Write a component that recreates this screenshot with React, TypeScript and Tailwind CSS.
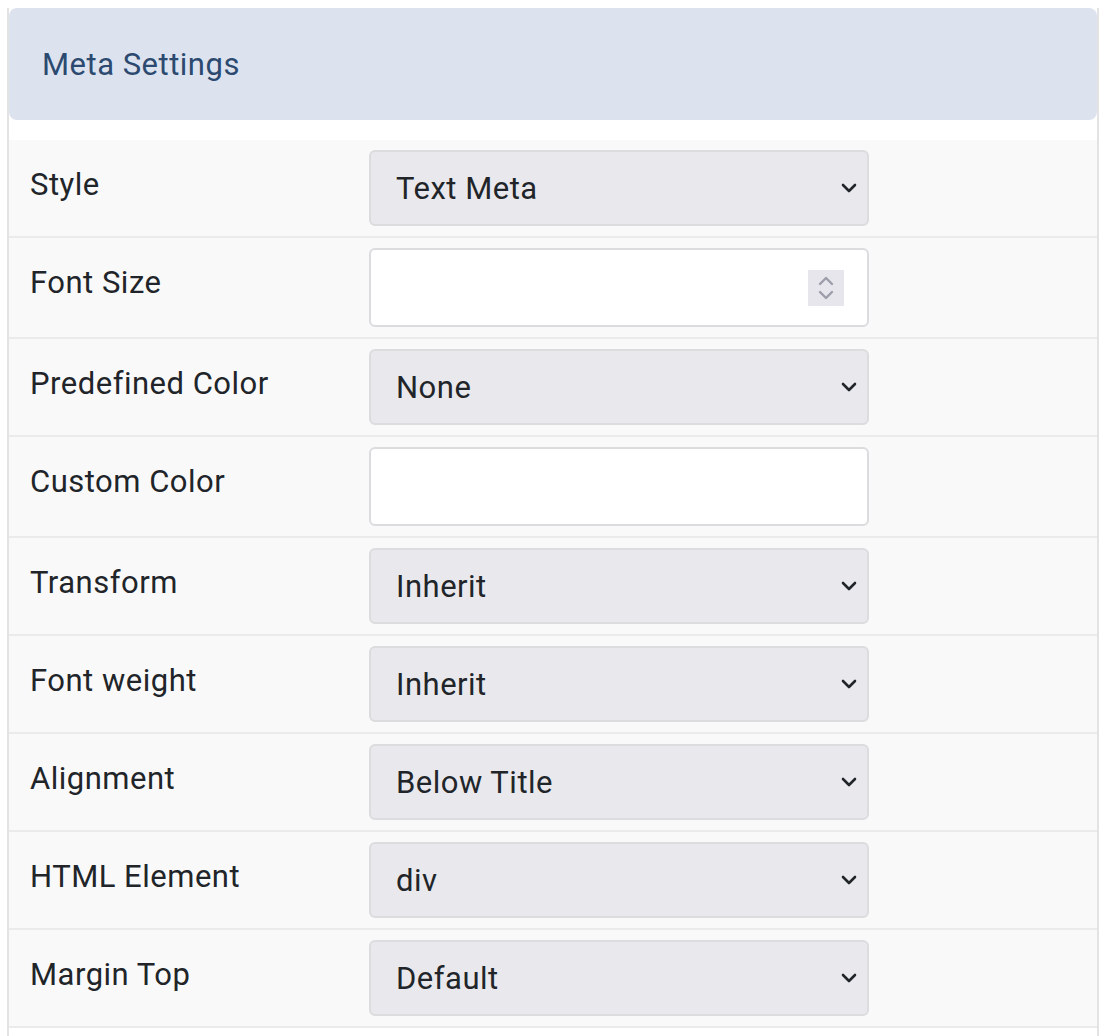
import { useState } from "react"

type Field = {
  label: string
  kind: "select" | "number" | "text"
  value?: string
  options?: string[]
}

const FIELDS: Field[] = [
  { label: "Style", kind: "select", value: "Text Meta", options: ["Text Meta", "Default"] },
  { label: "Font Size", kind: "number" },
  { label: "Predefined Color", kind: "select", value: "None", options: ["None", "Primary", "Muted"] },
  { label: "Custom Color", kind: "text" },
  { label: "Transform", kind: "select", value: "Inherit", options: ["Inherit", "Uppercase", "Lowercase"] },
  { label: "Font weight", kind: "select", value: "Inherit", options: ["Inherit", "Normal", "Bold"] },
  { label: "Alignment", kind: "select", value: "Below Title", options: ["Below Title", "Above Title"] },
  { label: "HTML Element", kind: "select", value: "div", options: ["div", "span", "p"] },
  { label: "Margin Top", kind: "select", value: "Default", options: ["Default", "Small", "Large"] },
]

function Chevron() {
  return (
    <svg className="pointer-events-none absolute right-[12px] top-1/2 -translate-y-1/2" width="16" height="10" viewBox="0 0 16 10">
      <path d="M2 2 L8 8 L14 2" fill="none" stroke="#212529" strokeWidth="2.6" strokeLinecap="round" strokeLinejoin="round" />
    </svg>
  )
}

function Spinner() {
  return (
    <div className="pointer-events-none absolute right-[25px] top-1/2 -translate-y-1/2 flex h-[36px] w-[36px] flex-col items-center justify-center gap-[4px] bg-[#e6e6ec]">
      <svg width="16" height="10" viewBox="0 0 16 10">
        <path d="M2 8 L8 2 L14 8" fill="none" stroke="#9d9dab" strokeWidth="2.4" strokeLinecap="round" strokeLinejoin="round" />
      </svg>
      <svg width="16" height="10" viewBox="0 0 16 10">
        <path d="M2 2 L8 8 L14 2" fill="none" stroke="#9d9dab" strokeWidth="2.4" strokeLinecap="round" strokeLinejoin="round" />
      </svg>
    </div>
  )
}

function Row({ field }: { field: Field }) {
  const [value, setValue] = useState(field.value ?? "")

  return (
    <div className="flex items-start border-b-2 border-[#ebebeb] bg-[#f9f9f9] py-[10px]">
      <label className="w-[360px] shrink-0 pl-[21px] pt-[12px] text-[31px] leading-[46px] tracking-[0.5px] text-[#212529]">
        {field.label}
      </label>
      {field.kind === "select" ? (
        <div className="relative w-[500px]">
          <select
            value={value}
            onChange={(e) => setValue(e.target.value)}
            className="h-[76px] w-full appearance-none rounded-[6px] border-2 border-[#dcdcdf] bg-[#e9e9ed] pl-[25px] pt-[2px] text-[31px] tracking-[0.5px] text-[#212529] outline-none"
          >
            {field.options?.map((o) => (
              <option key={o}>{o}</option>
            ))}
          </select>
          <Chevron />
        </div>
      ) : (
        <div className="relative w-[500px]">
          <input
            type="text"
            value={value}
            onChange={(e) => setValue(e.target.value)}
            className="h-[79px] w-full rounded-[6px] border-2 border-[#dcdcdf] bg-white px-[25px] text-[31px] text-[#212529] outline-none"
          />
          {field.kind === "number" && <Spinner />}
        </div>
      )}
    </div>
  )
}

export default function App() {
  return (
    <div className="min-h-screen bg-white font-['Roboto',sans-serif]">
      <div className="ml-[7px] min-h-[1036px] w-[1092px] border-x-2 border-[#e3e3e3]">
        {/* Header */}
        <div className="mt-[8px] flex h-[112px] items-center rounded-[8px] bg-[#dce3ef] pl-[33px] pt-[2px]">
          <h3 className="text-[31px] tracking-[0.5px] text-[#2c4a6f]">Meta Settings</h3>
        </div>

        <div className="mt-[20px]">
          {FIELDS.map((f) => (
            <Row key={f.label} field={f} />
          ))}
        </div>
      </div>
    </div>
  )
}
